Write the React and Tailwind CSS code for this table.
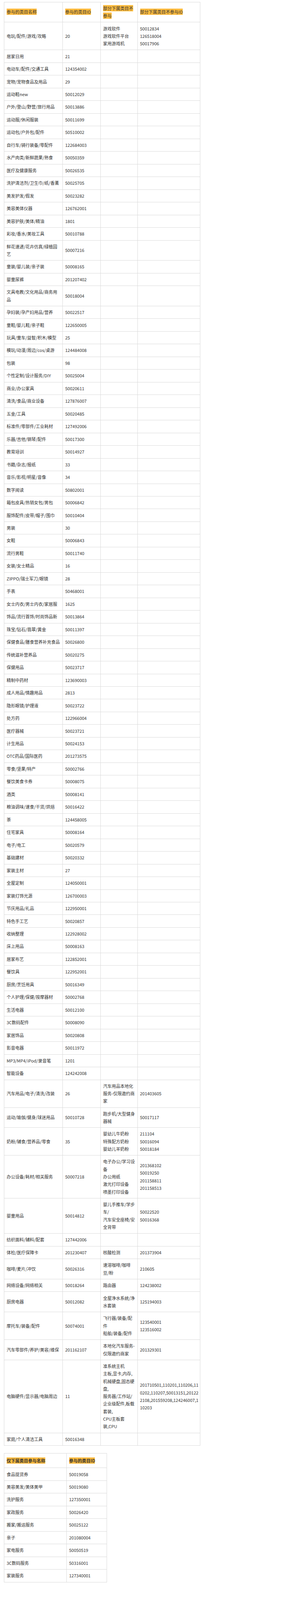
import { Fragment } from 'react'

const mainRows = [
  ['电玩/配件/游戏/攻略', '20', ['游戏软件', '游戏软件平台', '家用游戏机'], ['50012834', '126518004', '50017906']],
  ['居家日用', '21'],
  ['电动车/配件/交通工具', '124354002'],
  ['宠物/宠物食品及用品', '29'],
  ['运动鞋new', '50012029'],
  ['户外/登山/野营/旅行用品', '50013886'],
  ['运动服/休闲服装', '50011699'],
  ['运动包/户外包/配件', '50510002'],
  ['自行车/骑行装备/零配件', '122684003'],
  ['水产肉类/新鲜蔬果/熟食', '50050359'],
  ['医疗及健康服务', '50026535'],
  ['洗护清洁剂/卫生巾/纸/香薰', '50025705'],
  ['美发护发/假发', '50023282'],
  ['美容美体仪器', '126762001'],
  ['美容护肤/美体/精油', '1801'],
  ['彩妆/香水/美妆工具', '50010788'],
  [['鲜花速递/花卉仿真/绿植园', '艺'], '50007216'],
  ['童装/婴儿装/亲子装', '50008165'],
  ['婴童尿裤', '201207402'],
  [['文具电教/文化用品/商务用', '品'], '50018004'],
  ['孕妇装/孕产妇用品/营养', '50022517'],
  ['童鞋/婴儿鞋/亲子鞋', '122650005'],
  ['玩具/童车/益智/积木/模型', '25'],
  ['模玩/动漫/周边/cos/桌游', '124484008'],
  ['包装', '98'],
  ['个性定制/设计服务/DIY', '50025004'],
  ['商业/办公家具', '50020611'],
  ['清洗/食品/商业设备', '127876007'],
  ['五金/工具', '50020485'],
  ['标准件/零部件/工业耗材', '127492006'],
  ['乐器/吉他/钢琴/配件', '50017300'],
  ['教育培训', '50014927'],
  ['书籍/杂志/报纸', '33'],
  ['音乐/影视/明星/音像', '34'],
  ['数字阅读', '50802001'],
  ['箱包皮具/热销女包/男包', '50006842'],
  ['服饰配件/皮带/帽子/围巾', '50010404'],
  ['男装', '30'],
  ['女鞋', '50006843'],
  ['流行男鞋', '50011740'],
  ['女装/女士精品', '16'],
  ['ZIPPO/瑞士军刀/眼镜', '28'],
  ['手表', '50468001'],
  ['女士内衣/男士内衣/家居服', '1625'],
  ['饰品/流行首饰/时尚饰品新', '50013864'],
  ['珠宝/钻石/翡翠/黄金', '50011397'],
  ['保健食品/膳食营养补充食品', '50026800'],
  ['传统滋补营养品', '50020275'],
  ['保健用品', '50023717'],
  ['精制中药材', '123690003'],
  ['成人用品/情趣用品', '2813'],
  ['隐形眼镜/护理液', '50023722'],
  ['处方药', '122966004'],
  ['医疗器械', '50023721'],
  ['计生用品', '50024153'],
  ['OTC药品/国际医药', '201273575'],
  ['零食/坚果/特产', '50002766'],
  ['餐饮美食卡券', '50008075'],
  ['酒类', '50008141'],
  ['粮油调味/速食/干货/烘焙', '50016422'],
  ['茶', '124458005'],
  ['住宅家具', '50008164'],
  ['电子/电工', '50020579'],
  ['基础建材', '50020332'],
  ['家装主材', '27'],
  ['全屋定制', '124050001'],
  ['家装灯饰光源', '126700003'],
  ['节庆用品/礼品', '122950001'],
  ['特色手工艺', '50020857'],
  ['收纳整理', '122928002'],
  ['床上用品', '50008163'],
  ['居家布艺', '122852001'],
  ['餐饮具', '122952001'],
  ['厨房/烹饪用具', '50016349'],
  ['个人护理/保健/按摩器材', '50002768'],
  ['生活电器', '50012100'],
  ['3C数码配件', '50008090'],
  ['家居饰品', '50020808'],
  ['影音电器', '50011972'],
  ['MP3/MP4/iPod/录音笔', '1201'],
  ['智能设备', '124242008'],
  ['汽车用品/电子/清洗/改装', '26', ['汽车用品本地化', '服务-仅限邀约商', '家'], '201403605'],
  ['运动/瑜伽/健身/球迷用品', '50010728', ['跑步机/大型健身', '器械'], '50017117'],
  ['奶粉/辅食/营养品/零食', '35', ['婴幼儿牛奶粉', '特殊配方奶粉', '婴幼儿羊奶粉'], ['211104', '50016094', '50018184']],
  ['办公设备/耗材/相关服务', '50007218', ['电子办公/学习设', '备', '办公用纸', '激光打印设备', '喷墨打印设备'], ['201368102', '50019250', '201158811', '201158513']],
  ['婴童用品', '50014812', ['婴儿手推车/学步', '车/', '汽车安全座椅/安', '全背带'], ['50022520', '50016368']],
  ['纺织面料/辅料/配套', '127442006'],
  ['体检/医疗保障卡', '201230407', '核酸检测', '201373904'],
  ['咖啡/麦片/冲饮', '50026316', ['速溶咖啡/咖啡', '豆/粉'], '210605'],
  ['网络设备/网络相关', '50018264', '路由器', '124238002'],
  ['厨房电器', '50012082', ['全屋净水系统/净', '水套装'], '125194003'],
  ['摩托车/装备/配件', '50074001', ['飞行器/装备/配', '件', '船舶/装备/配件'], ['123540001', '123516002']],
  ['汽车零部件/养护/美容/维保', '201162107', ['本地化汽车服务-', '仅限邀约商家'], '201329301'],
  [
    '电脑硬件/显示器/电脑周边',
    '11',
    ['准系统主机', '主板,显卡,内存,', '机械硬盘,固态硬', '盘,', '服务器/工作站/', '企业级配件,板载', '套装,', 'CPU主板套', '装,CPU'],
    ['201710501,110201,110206,11', '0202,110207,50013151,20122', '2108,201559208,124246007,1', '10203'],
  ],
  ['家庭/个人清洁工具', '50016348'],
]

const serviceRows = [
  ['食品提货券', '50019058'],
  ['美容美发/美体美甲', '50019080'],
  ['洗护服务', '127350001'],
  ['家政服务', '50026420'],
  ['搬家/搬运服务', '50025122'],
  ['亲子', '201080004'],
  ['家电服务', '50050519'],
  ['3C数码服务', '50316001'],
  ['家装服务', '127340001'],
]

function Lines({ value }) {
  if (!value) return null
  if (!Array.isArray(value)) return value
  return value.map((line, i) => (
    <Fragment key={i}>
      {i > 0 && <br />}
      {line}
    </Fragment>
  ))
}

function Mark({ children }) {
  return <span className="bg-[#fdbb3f]">{children}</span>
}

const cell = 'border border-[#dadada] px-[6px] py-[6.1px] text-left align-middle whitespace-nowrap'
const headCell = 'border border-[#dadada] px-[6px] py-[8.5px] text-left align-middle font-bold whitespace-nowrap'

export default function App() {
  return (
    <div className="min-h-screen bg-white pt-[4.7px] pl-[10px] font-['Noto_Sans_CJK_SC','Microsoft_YaHei',sans-serif] text-[11px] leading-[19.28px] text-[#333]">
      {/* 参与类目 */}
      <table className="w-[502px] table-fixed border-collapse">
        <colgroup>
          <col className="w-[150px]" />
          <col className="w-[97px]" />
          <col className="w-[94.5px]" />
          <col className="w-[160.5px]" />
        </colgroup>
        <thead>
          <tr>
            <th className={`${cell} font-normal`}>
              <Mark>参与的类目名称</Mark>
            </th>
            <th className={`${cell} font-normal`}>
              <Mark>参与的类目ID</Mark>
            </th>
            <th className={`${cell} font-normal`}>
              <Mark>
                部分下属类目不
                <br />
                参与
              </Mark>
            </th>
            <th className={`${cell} font-normal`}>
              <Mark>部分下属类目不参与ID</Mark>
            </th>
          </tr>
        </thead>
        <tbody>
          {mainRows.map((r, i) => (
            <tr key={i}>
              <td className={cell}>
                <Lines value={r[0]} />
              </td>
              <td className={cell}>{r[1]}</td>
              <td className={cell}>
                <Lines value={r[2]} />
              </td>
              <td className={cell}>
                <Lines value={r[3]} />
              </td>
            </tr>
          ))}
        </tbody>
      </table>

      {/* 仅下属类目参与 */}
      <table className="mt-[19px] w-[263px] table-fixed border-collapse">
        <colgroup>
          <col className="w-[160px]" />
          <col className="w-[103px]" />
        </colgroup>
        <thead>
          <tr>
            <th className={headCell}>
              <Mark>仅下属类目参与名称</Mark>
            </th>
            <th className={headCell}>
              <Mark>参与的类目ID</Mark>
            </th>
          </tr>
        </thead>
        <tbody>
          {serviceRows.map((r) => (
            <tr key={r[1]}>
              <td className={cell}>{r[0]}</td>
              <td className={cell}>{r[1]}</td>
            </tr>
          ))}
        </tbody>
      </table>
    </div>
  )
}
